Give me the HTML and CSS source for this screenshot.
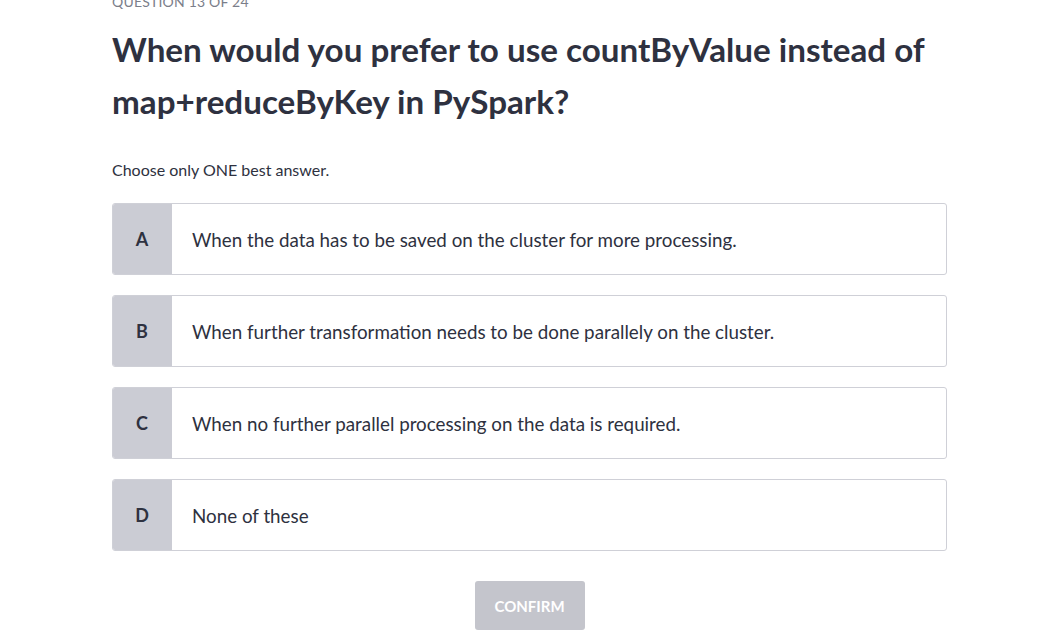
FILE: index.html
```html
<!DOCTYPE html>
<html>
<head>
<meta charset="utf-8">
<link rel="stylesheet" href="styles.css">
</head>
<body>
<main class="quiz">
  <div class="counter">QUESTION 13 OF 24</div>
  <h1 class="title">When would you prefer to use countByValue instead of map+reduceByKey in PySpark?</h1>
  <p class="hint">Choose only ONE best answer.</p>
  <div class="options">
    <div class="option"><div class="letter">A</div><div class="text">When the data has to be saved on the cluster for more processing.</div></div>
    <div class="option"><div class="letter">B</div><div class="text">When further transformation needs to be done parallely on the cluster.</div></div>
    <div class="option"><div class="letter">C</div><div class="text">When no further parallel processing on the data is required.</div></div>
    <div class="option"><div class="letter">D</div><div class="text">None of these</div></div>
  </div>
  <div class="actions"><button class="confirm">CONFIRM</button></div>
</main>
</body>
</html>
```

FILE: styles.css
```css
html, body { margin: 0; padding: 0; background: #fff; }
body { font-family: "Lato", "Open Sans", sans-serif; color: #2e3140; overflow: hidden; }
.quiz { width: 835px; margin: -8px 0 0 112px; }
.counter { font-size: 14px; color: #7b7e8a; line-height: 20px; letter-spacing: 0.2px; }
.title { font-size: 33.2px; font-weight: 700; line-height: 52px; margin: 11px 0 0 0; color: #2e3140; }
.hint { font-size: 16px; line-height: 20px; margin: 33px 0 0 0; color: #2e3140; }
.options { display: flex; flex-direction: column; gap: 20px; margin-top: 23px; }
.option { display: flex; height: 72px; box-sizing: border-box; border: 1px solid #cfd0d7; border-radius: 3px; overflow: hidden; }
.letter { width: 60px; flex: none; background: #cbccd4; display: flex; align-items: center; justify-content: center; font-size: 18px; font-weight: 700; color: #2e3140; margin: -1px 0 -1px -1px; }
.text { display: flex; align-items: center; padding-left: 20px; font-size: 18.8px; color: #2e3140; }
.actions { display: flex; justify-content: center; margin-top: 30px; }
.confirm { width: 110px; height: 49px; border: none; border-radius: 3px; background: #c4c5cc; color: #fff; font-family: inherit; font-size: 15px; font-weight: 700; }
```
